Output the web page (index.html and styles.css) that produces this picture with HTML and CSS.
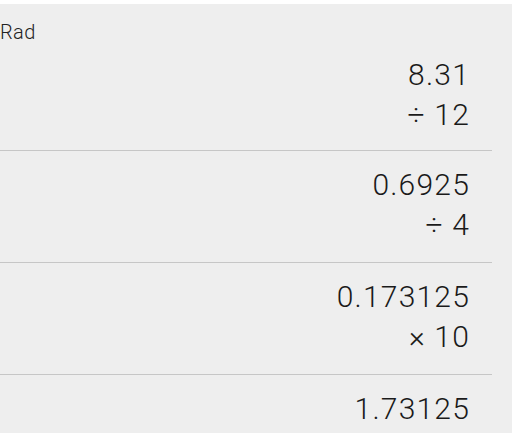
FILE: index.html
```html
<!DOCTYPE html>
<html>
<head>
<meta charset="utf-8">
<link rel="stylesheet" href="styles.css">
</head>
<body>
<div class="panel">
  <div class="mode">Rad</div>
  <div class="entry first">
    <div class="line">8.31</div>
    <div class="line">÷ 12</div>
  </div>
  <div class="entry">
    <div class="line">0.6925</div>
    <div class="line">÷ 4</div>
  </div>
  <div class="entry">
    <div class="line">0.173125</div>
    <div class="line">× 10</div>
  </div>
  <div class="entry last">
    <div class="line">1.73125</div>
  </div>
</div>
</body>
</html>
```
FILE: styles.css
```css
html, body {
  margin: 0;
  padding: 0;
  background: #ffffff;
}
body {
  font-family: Roboto, "Liberation Sans", sans-serif;
  color: #1a1a1a;
  overflow: hidden;
}
.panel {
  margin-top: 4px;
  background: #eeeeee;
  height: 429px;
  overflow: hidden;
}
.mode {
  padding-top: 16px;
  font-size: 20px;
  line-height: 24px;
  font-weight: 300;
  letter-spacing: 0.4px;
  color: #222222;
}
.entry {
  width: 492px;
  box-sizing: border-box;
  padding: 14px 22px 17px 0;
  border-bottom: 1px solid #c6c6c6;
  text-align: right;
}
.entry.first {
  padding-top: 11px;
  padding-bottom: 15px;
}
.entry.last {
  border-bottom: none;
}
.line {
  font-size: 30px;
  line-height: 40px;
  font-weight: 300;
  letter-spacing: 1.2px;
}
```
